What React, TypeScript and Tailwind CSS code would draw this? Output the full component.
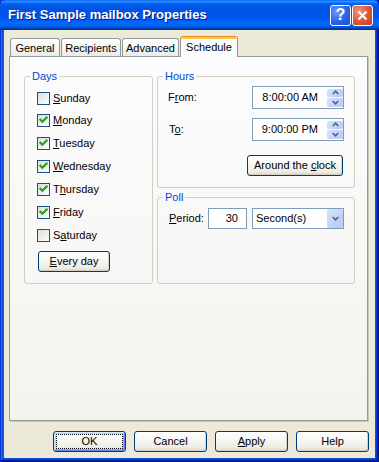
import React from "react";

const U = ({ children }: { children: React.ReactNode }) => (
  <span className="underline decoration-1 underline-offset-[1px]">{children}</span>
);

function CheckBox({ checked }: { checked: boolean }) {
  return (
    <svg width="13" height="13" viewBox="0 0 13 13" className="shrink-0 block">
      <defs>
        <linearGradient id="cbfill" x1="0" y1="0" x2="1" y2="1">
          <stop offset="0" stopColor="#DCDCD7" />
          <stop offset="1" stopColor="#FFFFFF" />
        </linearGradient>
      </defs>
      <rect x="0.5" y="0.5" width="12" height="12" fill="url(#cbfill)" stroke="#1C5180" />
      {checked && (
        <path d="M3.4 5.8 L5.4 7.8 L9.6 3.6" fill="none" stroke="#21A121" strokeWidth="2.2" strokeLinecap="square" />
      )}
    </svg>
  );
}

function XPButton({
  children,
  className,
  isDefault,
}: {
  children: React.ReactNode;
  className: string;
  isDefault?: boolean;
}) {
  if (isDefault) {
    return (
      <div
        className={
          "h-[21px] rounded-[3px] border border-[#003C74] bg-[linear-gradient(180deg,#FFFFFF_0%,#F6F6F2_45%,#ECEBE6_85%,#D6D0C5_100%)] shadow-[inset_1px_1px_0_#CEE7FF,inset_-1px_-1px_0_#6982EE,inset_2px_2px_0_#BCD4F6,inset_-2px_-2px_0_#89ADE4] p-[2px] flex " +
          className
        }
      >
        <div className="flex-1 border border-dotted border-black flex items-center justify-center leading-[13px]">
          {children}
        </div>
      </div>
    );
  }
  return (
    <div
      className={
        "h-[21px] rounded-[3px] border border-[#003C74] bg-[linear-gradient(180deg,#FFFFFF_0%,#F6F6F2_45%,#ECEBE6_85%,#D6D0C5_100%)] shadow-[inset_-1px_-1px_0_#D6D0C5] flex items-center justify-center leading-[13px] " +
        className
      }
    >
      {children}
    </div>
  );
}

function SpinArrow({ down }: { down?: boolean }) {
  return (
    <svg width="7" height="5" viewBox="0 0 7 5" className="block">
      <path
        d={down ? "M0.7 1 L3.5 3.8 L6.3 1" : "M0.7 4 L3.5 1.2 L6.3 4"}
        fill="none"
        stroke="#4D6185"
        strokeWidth="1.6"
      />
    </svg>
  );
}

function Spinner() {
  return (
    <div className="w-[16px] h-[18px] flex flex-col gap-[1px] bg-[#F0F4FC]">
      <div className="flex-1 rounded-[2px] bg-[linear-gradient(135deg,#D7E2FC,#B7CAF5)] flex items-center justify-center">
        <SpinArrow />
      </div>
      <div className="flex-1 rounded-[2px] bg-[linear-gradient(135deg,#D7E2FC,#B7CAF5)] flex items-center justify-center">
        <SpinArrow down />
      </div>
    </div>
  );
}

function TimeBox({ value }: { value: string }) {
  return (
    <div className="w-[92px] h-[23px] border border-[#7F9DB9] bg-white flex items-center justify-end gap-[9px] pr-[0px]">
      <span className="leading-[13px]">{value}</span>
      <Spinner />
    </div>
  );
}

function DayRow({ checked, label, mt }: { checked: boolean; label: React.ReactNode; mt: string }) {
  return (
    <div className={"ml-[7px] h-[13px] flex items-center " + mt}>
      <CheckBox checked={checked} />
      <span className="ml-[3px] leading-[13px]">{label}</span>
    </div>
  );
}

export default function App() {
  return (
    <div className="w-[379px] h-[462px] flex flex-col bg-[#0855DD] shadow-[inset_-1px_-1px_#00138c,inset_1px_1px_#0831d9,inset_-2px_-2px_#001ea0,inset_2px_2px_#166aee,inset_-3px_-3px_#003bda,inset_3px_3px_#0855dd] text-[11px] text-black [font-family:'Liberation_Sans',Arial,sans-serif]">
      {/* Title bar */}
      <div className="h-[30px] flex items-center bg-[linear-gradient(180deg,#0058EE_0%,#3593FF_4%,#288EFF_6%,#127DFF_8%,#036FFC_10%,#0262EE_14%,#0057E5_20%,#0054E3_24%,#0055EB_56%,#005BF5_66%,#026AFE_76%,#0062EF_86%,#0052D6_92%,#0040AB_94%,#003092_100%)] rounded-t-[6px]">
        <span className="ml-[8px] text-white font-bold text-[13px] leading-[16px] [text-shadow:1px_1px_0_#0A1883]">
          First Sample mailbox Properties
        </span>
        <div className="ml-auto mr-[6px] flex gap-[1px]">
          <div className="w-[21px] h-[21px] rounded-[3px] border border-white bg-[radial-gradient(circle_at_30%_30%,#6C9BF8,#2A62E6_55%,#1E4FD2)] flex items-center justify-center text-white font-bold text-[16px] leading-[16px]">
            ?
          </div>
          <div className="w-[21px] h-[21px] rounded-[3px] border border-white bg-[radial-gradient(circle_at_30%_30%,#F0957A,#DD5430_55%,#C4401F)] flex items-center justify-center">
            <svg width="11" height="11" viewBox="0 0 11 11" className="block">
              <path d="M1.5 1.5 L9.5 9.5 M9.5 1.5 L1.5 9.5" stroke="white" strokeWidth="2" />
            </svg>
          </div>
        </div>
      </div>

      {/* Client area */}
      <div className="flex-1 mx-[4px] mb-[4px] bg-[#ECE9D8] flex flex-col">
        {/* Tabs */}
        <div className="mt-[6px] pl-[6px] h-[20px] flex items-end gap-[1px]">
          <div className="w-[50px] h-[18px] border border-b-0 border-[#919B9C] rounded-t-[3px] bg-[linear-gradient(180deg,#FFFFFF,#ECEBE6)] flex items-center justify-center pt-[1px] leading-[13px]">
            General
          </div>
          <div className="w-[60px] h-[18px] border border-b-0 border-[#919B9C] rounded-t-[3px] bg-[linear-gradient(180deg,#FFFFFF,#ECEBE6)] flex items-center justify-center pt-[1px] leading-[13px]">
            Recipients
          </div>
          <div className="w-[57px] h-[18px] border border-b-0 border-[#919B9C] rounded-t-[3px] bg-[linear-gradient(180deg,#FFFFFF,#ECEBE6)] flex items-center justify-center pt-[1px] leading-[13px]">
            Advanced
          </div>
          <div className="relative z-10 -mb-px w-[58px] h-[21px] border-x border-[#919B9C] rounded-t-[3px] overflow-hidden bg-[#FCFCFE] flex flex-col">
            <div className="h-[1px] bg-[#E68B2C]" />
            <div className="h-[2px] bg-[#FFC73C]" />
            <div className="flex-1 flex items-center justify-center leading-[13px] pb-[1px]">Schedule</div>
          </div>
        </div>

        {/* Tab pane */}
        <div className="ml-[5px] w-[359px] h-[365px] border border-[#919B9C] shadow-[1px_1px_0_#C9C7BA] bg-[linear-gradient(180deg,#FCFCFE,#F4F3EE)] flex gap-[4px] pt-[13px] pl-[14px]">
          {/* Days */}
          <fieldset className="w-[129px] h-[214px] rounded-[3px] border border-[#D0D0BF] pl-[5px]">
            <legend className="px-[2px] leading-[12px] text-[#0046D5]">Days</legend>
            <div className="flex flex-col">
              <DayRow mt="mt-[10px]" checked={false} label={<><U>S</U>unday</>} />
              <DayRow mt="mt-[9px]" checked label={<><U>M</U>onday</>} />
              <DayRow mt="mt-[10px]" checked label={<><U>T</U>uesday</>} />
              <DayRow mt="mt-[10px]" checked label={<><U>W</U>ednesday</>} />
              <DayRow mt="mt-[10px]" checked label={<>T<U>h</U>ursday</>} />
              <DayRow mt="mt-[10px]" checked label={<><U>F</U>riday</>} />
              <DayRow mt="mt-[10px]" checked={false} label={<>S<U>a</U>turday</>} />
              <XPButton className="mt-[9px] ml-[8px] w-[72px]">
                <span><U>E</U>very day</span>
              </XPButton>
            </div>
          </fieldset>

          {/* Right column */}
          <div className="w-[198px] flex flex-col">
            <fieldset className="h-[118px] rounded-[3px] border border-[#D0D0BF] pl-[5px]">
              <legend className="px-[2px] leading-[12px] text-[#0046D5]">Hours</legend>
              <div className="flex flex-col">
                <div className="mt-[4px] h-[23px] flex items-center">
                  <span className="ml-[5px] leading-[13px]">F<U>r</U>om:</span>
                  <div className="ml-auto mr-[10px]">
                    <TimeBox value="8:00:00 AM" />
                  </div>
                </div>
                <div className="mt-[9px] h-[23px] flex items-center">
                  <span className="ml-[6px] leading-[13px]">T<U>o</U>:</span>
                  <div className="ml-auto mr-[10px]">
                    <TimeBox value="9:00:00 PM" />
                  </div>
                </div>
                <div className="mt-[14px] flex justify-end mr-[11px]">
                  <XPButton className="w-[96px]">
                    <span>Around the <U>c</U>lock</span>
                  </XPButton>
                </div>
              </div>
            </fieldset>

            <fieldset className="mt-[3px] h-[93px] rounded-[3px] border border-[#D0D0BF] pl-[5px]">
              <legend className="px-[2px] leading-[12px] text-[#0046D5]">Poll</legend>
              <div className="mt-[5px] h-[21px] flex items-center">
                <span className="ml-[6px] leading-[13px]"><U>P</U>eriod:</span>
                <div className="ml-auto w-[39px] h-[21px] border border-[#7F9DB9] bg-white flex items-center justify-end pr-[8px] leading-[13px]">
                  30
                </div>
                <div className="ml-[5px] mr-[10px] w-[92px] h-[21px] border border-[#7F9DB9] bg-white flex items-center pl-[3px]">
                  <span className="flex-1 leading-[13px]">Second(s)</span>
                  <div className="w-[16px] h-[19px] rounded-[2px] bg-[linear-gradient(135deg,#D7E2FC,#B4C8F5)] flex items-center justify-center">
                    <SpinArrow down />
                  </div>
                </div>
              </div>
            </fieldset>
          </div>
        </div>

        {/* Bottom buttons */}
        <div className="mt-[10px] flex justify-end gap-[8px] pr-[6px]">
          <XPButton isDefault className="w-[73px]">
            <span>OK</span>
          </XPButton>
          <XPButton className="w-[73px]">
            <span>Cancel</span>
          </XPButton>
          <XPButton className="w-[73px]">
            <span><U>A</U>pply</span>
          </XPButton>
          <XPButton className="w-[73px]">
            <span>Help</span>
          </XPButton>
        </div>
      </div>
    </div>
  );
}
